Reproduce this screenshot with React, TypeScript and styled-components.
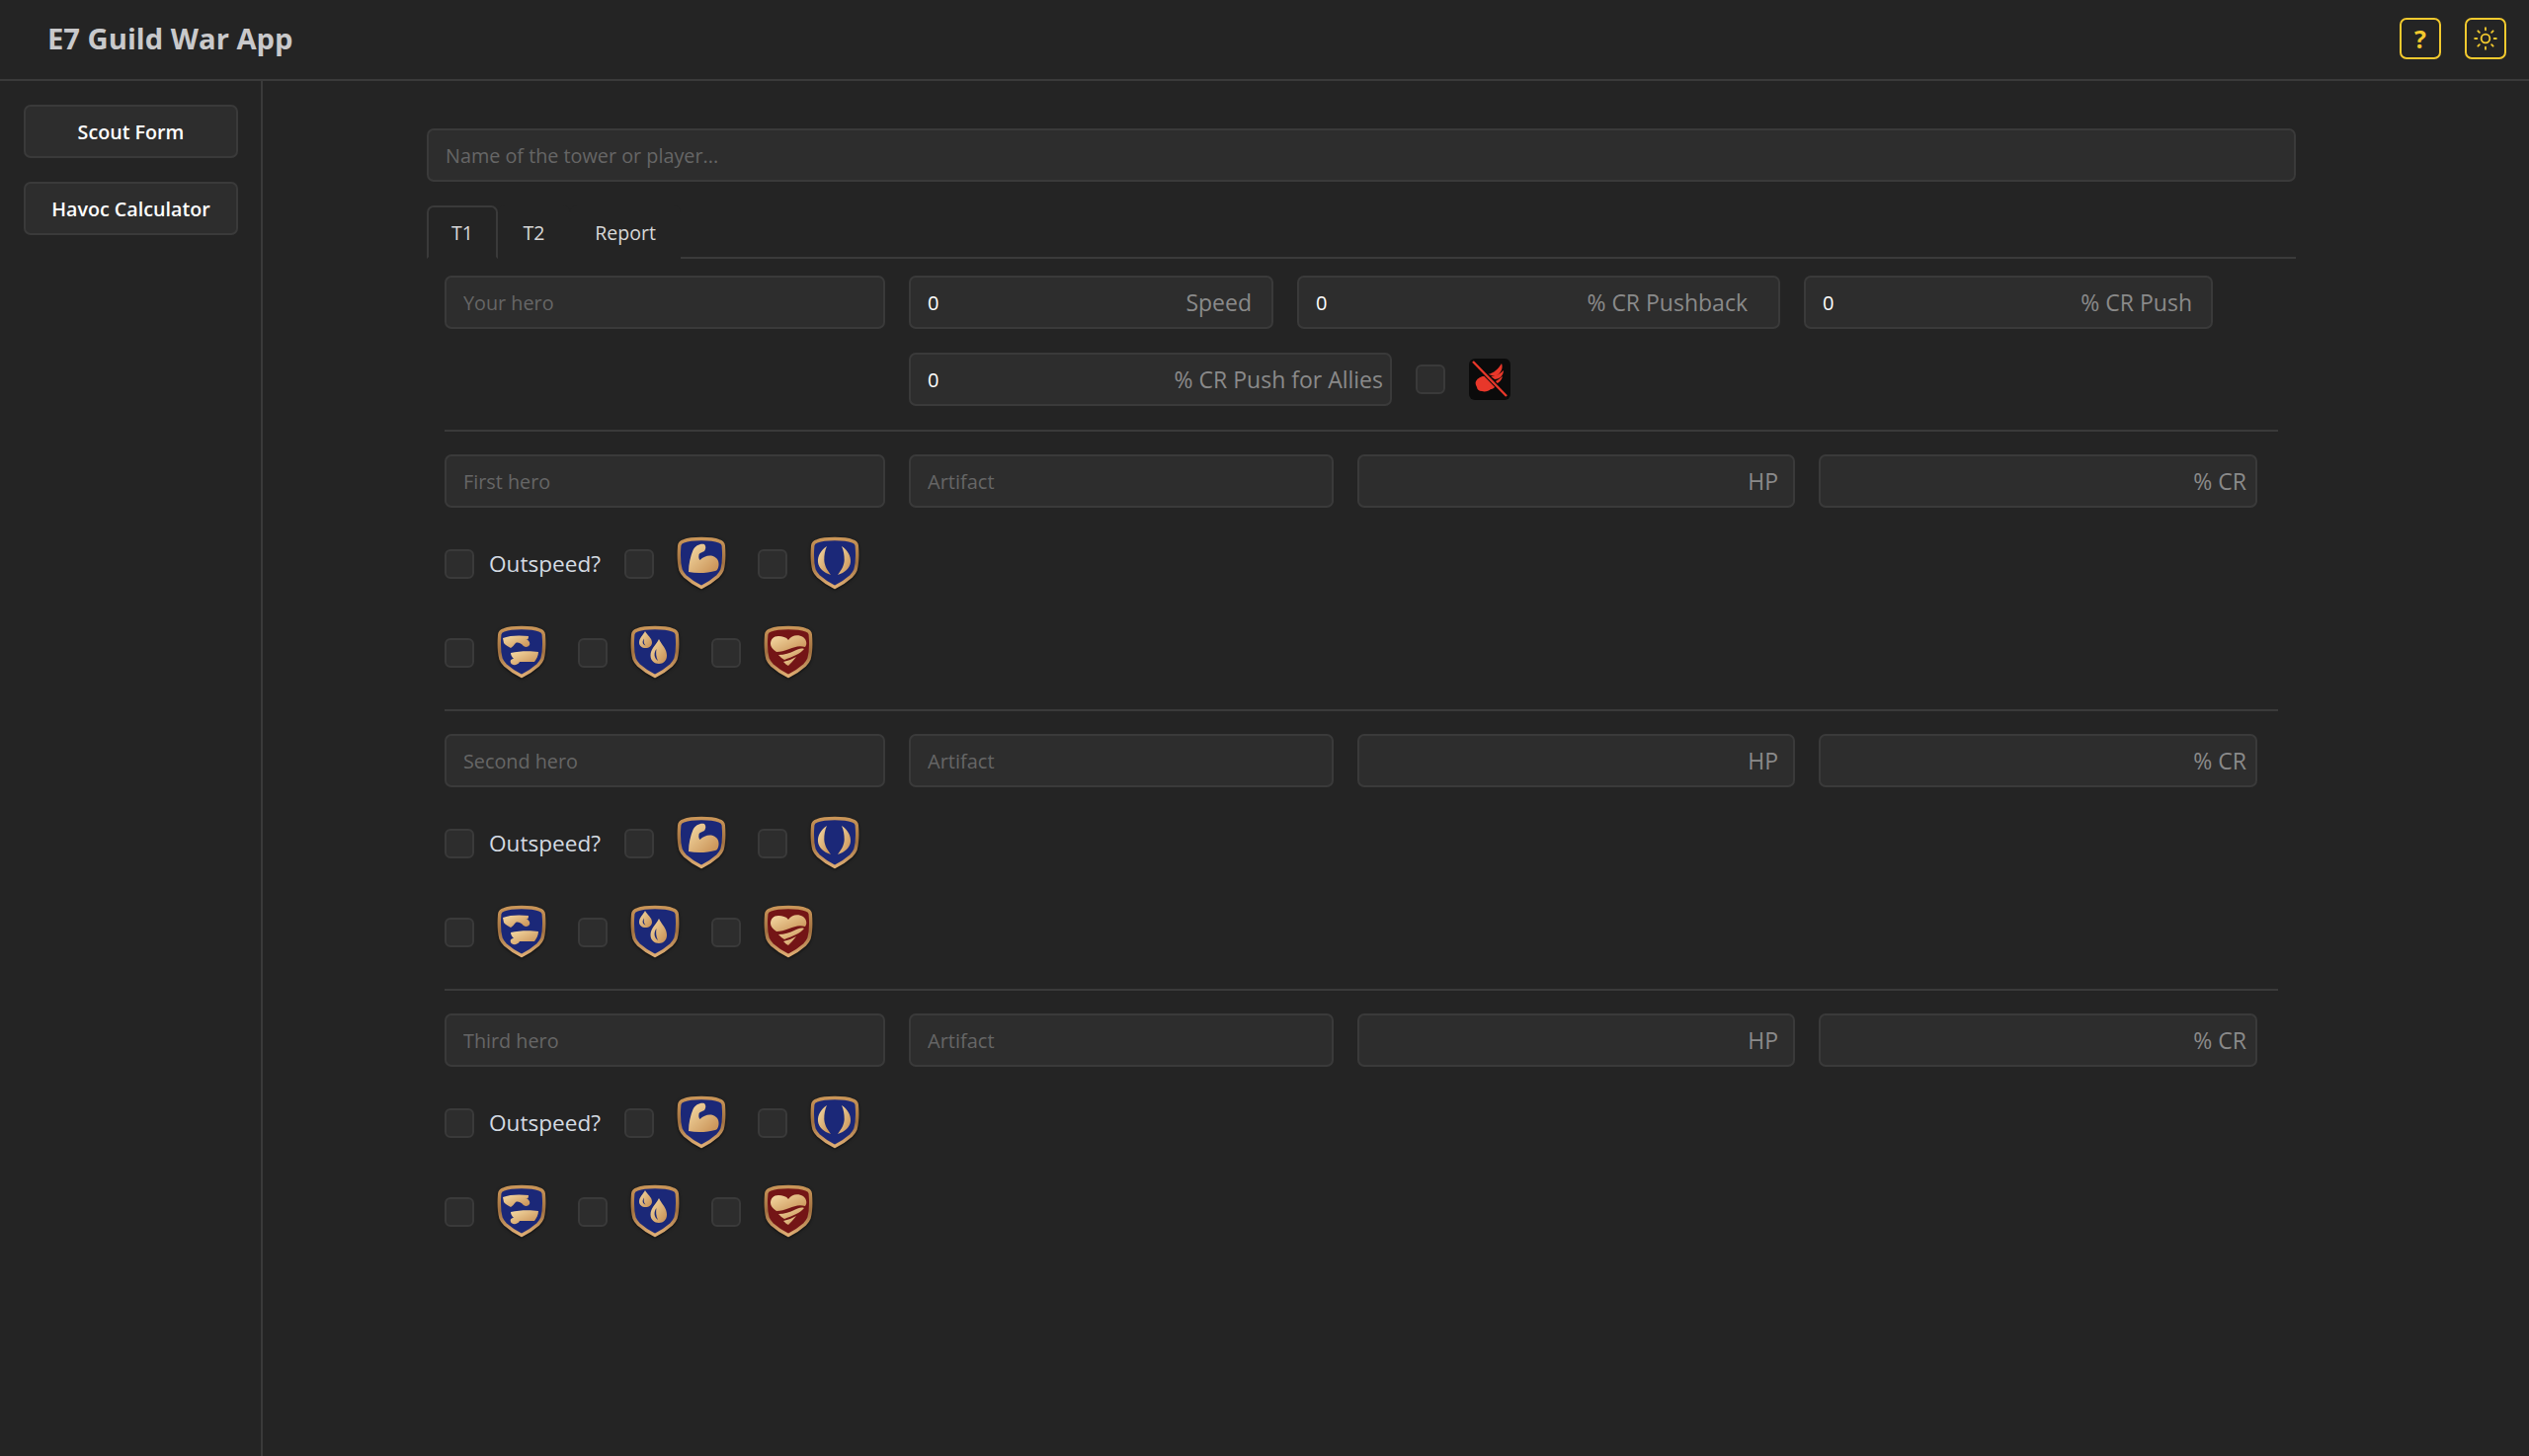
import React from "react";
import styled, { createGlobalStyle } from "styled-components";
import { Sun } from "lucide-react";

const Global = createGlobalStyle`
  html, body { margin: 0; padding: 0; background: #242424; }
  body { font-family: "Open Sans", "Noto Sans", sans-serif; color: #e6e6e6; }
  * { box-sizing: border-box; }
`;

const Page = styled.div`
  width: 2560px;
  height: 1474px;
  display: flex;
  flex-direction: column;
  background: #242424;
  overflow: hidden;
`;
const Header = styled.header`
  height: 82px;
  flex: none;
  display: flex;
  align-items: center;
  justify-content: space-between;
  padding: 0 23px 2px 48px;
  border-bottom: 2px solid #3a3a3a;
`;
const Title = styled.h1`
  margin: 0;
  font-size: 29.2px;
  font-weight: 700;
  color: #c9c9cb;
`;
const HeaderActions = styled.div`
  display: flex;
  gap: 24px;
`;
const IconButton = styled.button`
  width: 42px;
  height: 42px;
  padding: 0;
  display: flex;
  align-items: center;
  justify-content: center;
  background: transparent;
  border: 2px solid #f2c92e;
  border-radius: 7px;
  color: #f2c92e;
  font: 700 25px "Open Sans", sans-serif;
`;
const Body = styled.div`
  flex: 1;
  display: flex;
  min-height: 0;
`;
const Sidebar = styled.nav`
  width: 266px;
  flex: none;
  padding: 24px 24px;
  display: flex;
  flex-direction: column;
  gap: 24px;
  border-right: 2px solid #3a3a3a;
`;
const NavButton = styled.button`
  width: 217px;
  height: 54px;
  background: #2d2d2d;
  border: 2px solid #3a3a3a;
  border-radius: 7px;
  color: #fff;
  font: 600 19.7px "Open Sans", sans-serif;
  padding: 0;
`;
const Main = styled.main`
  flex: 1;
  padding: 48px 236px 0 166px;
`;
const TextBox = styled.input`
  width: 100%;
  height: 54px;
  background: #2d2d2d;
  border: 2px solid #3a3a3a;
  border-radius: 7px;
  padding: 1px 17px 0 17px;
  color: #fff;
  font: 400 19.8px "Open Sans", sans-serif;
  &::placeholder { color: #666; opacity: 1; }
`;
const Tabs = styled.div`
  display: flex;
  margin-top: 24px;
  height: 54px;
  border-bottom: 2px solid #3a3a3a;
`;
const Tab = styled.div<{ $active?: boolean }>`
  height: 54px;
  padding: 0 ${p => (p.$active ? 23 : 23.5)}px;
  display: flex;
  align-items: center;
  font-size: 19.5px;
  color: #d8d8d8;
  background: #242424;
  border: 2px solid ${p => (p.$active ? "#3a3a3a" : "transparent")};
  border-bottom-color: ${p => (p.$active ? "#242424" : "transparent")};
  border-radius: 7px 7px 0 0;
`;
const Panel = styled.section`
  padding: 17px 18px 0;
`;
const TopBlock = styled.div`
  display: flex;
  gap: 24px;
  padding-bottom: 24px;
`;
const HeroSlot = styled.div`
  width: 446px;
  flex: none;
`;
const TopRows = styled.div`
  display: flex;
  flex-direction: column;
  gap: 24px;
`;
const Row = styled.div`
  display: flex;
  align-items: center;
  gap: 24px;
`;
const Field = styled.div<{ $w: number; $pad: number }>`
  width: ${p => p.$w}px;
  height: 54px;
  flex: none;
  display: flex;
  align-items: center;
  padding-right: ${p => p.$pad}px;
  background: #2d2d2d;
  border: 2px solid #3a3a3a;
  border-radius: 7px;
`;
const FieldInput = styled.input`
  flex: 1;
  min-width: 0;
  height: 100%;
  background: transparent;
  border: 0;
  padding: 1px 0 0 17px;
  color: #fff;
  font: 400 20px "Open Sans", sans-serif;
  &::placeholder { color: #666; opacity: 1; }
`;
const Unit = styled.span`
  flex: none;
  color: #8a8a8a;
  font-size: 23px;
`;
const Check = styled.span`
  display: block;
  width: 30px;
  height: 30px;
  flex: none;
  background: #2d2d2d;
  border: 2px solid #3a3a3a;
  border-radius: 6px;
`;
const Divider = styled.hr`
  margin: 0;
  height: 2px;
  border: 0;
  background: #3a3a3a;
`;
const HeroBlock = styled.div`
  padding: 23px 0 31px;
`;
const HeroFields = styled(Row)`
  margin-bottom: 29px;
`;
const StatusRow = styled.div`
  display: flex;
  align-items: center;
  height: 54px;
  & + & { margin-top: 36px; }
  ${Check} { margin-top: 2px; }
`;
const Outspeed = styled.label`
  margin-left: 15px;
  margin-right: 24px;
  font-size: 22.6px;
  color: #d5dbe2;
  white-space: nowrap;
`;
const StatusGroup = styled.div`
  display: flex;
  align-items: center;
  gap: 22px;
  margin-right: 31px;
`;
const WingBadge = styled.span`
  display: block;
  width: 42px;
  height: 42px;
  flex: none;
  background: #0b0b0b;
  border-radius: 6px;
  overflow: hidden;
`;
const WingSvg = styled.svg`
  display: block;
  width: 42px;
  height: 42px;
`;
const BadgeSvg = styled.svg`
  display: block;
  width: 52px;
  height: 54px;
  flex: none;
  filter: drop-shadow(0 1px 1.5px rgba(0, 0, 0, 0.6));
`;

type Kind = "attack" | "eye" | "fists" | "drops" | "heart";

const Shield = ({ kind, n }: { kind: Kind; n: number }) => {
  const id = `${kind}-${n}`;
  return (
    <BadgeSvg viewBox="0 0 52 54">
      <defs>
        <linearGradient id={`g-${id}`} x1="0" y1="0" x2="1" y2="1">
          <stop offset="0" stopColor="#f6dca6" />
          <stop offset="1" stopColor="#c58c50" />
        </linearGradient>
        <linearGradient id={`r-${id}`} x1="0" y1="0" x2="0" y2="1">
          <stop offset="0" stopColor="#c99558" />
          <stop offset="0.5" stopColor="#a07040" />
          <stop offset="1" stopColor="#dfae74" />
        </linearGradient>
      </defs>
      <path
        d="M26 2.500C33 2.500 39 3 44 4.800C47 5.800 48.200 7 48.300 9.500C49 18 49 27 47 34C46 36.500 44.500 38.500 42.500 40.500C37.500 45 32 48.500 26 51.500C20 48.500 14.500 45 9.500 40.500C7.500 38.500 6 36.500 5 34C3 27 3 18 3.700 9.500C3.800 7 5 5.800 8 4.800C13 3 19 2.500 26 2.500Z"
        fill={kind === "heart" ? "#741516" : "#1b2878"}
        stroke={`url(#r-${id})`}
        strokeWidth="3.400"
        strokeLinejoin="round"
      />
      <g fill={`url(#g-${id})`}>
        {kind === "attack" && (
          <path d="M13 36C13 28 15 20 17.500 14C20 9 25 7 29 8C31 10 30.500 13 29 15C26 16.500 23.500 17 23.500 19C23 21 23.500 23 24.500 24C28 20.500 32 19 36 19.500C41 20.500 44 24 43.500 29C43 33 42 34.500 40 35C33 37 22 38 13 36Z" />
        )}
        {kind === "eye" && (
          <>
            <path d="M18 10C12 14 8.500 20 9 26C9.500 32 15 37 22 39C17.500 33 15.500 29 15.300 24C15.300 19 16 14 18 10Z" />
            <path d="M33 10C39 14 42.500 20 42 26C41.500 32 36 37 29 39C33.500 33 35.500 29 35.700 24C35.700 19 35 14 33 10Z" />
          </>
        )}
        {kind === "fists" && (
          <>
            <path d="M7 13C14 10 25 10 33 11C33 14 32 15 30 15C33 14 35 18 34 20C32 23 28 22 27 20C25 18 22 17 20 18C18 20 17 22 15 23C12 21 9 20 8 18Z" />
            <path d="M15 28C24 26 35 26 43 27C43 31 41 34 39 37L24 37C22 41 16 41 15 38C14 35 16 34 18 34C16 32 15 30 15 28Z" />
          </>
        )}
        {kind === "drops" && (
          <>
            <path fillRule="evenodd" d="M16 6C18 10 23 13 23 17.500C23 21 20 23 16.500 23C13 23 10 21 10 17.500C10 13 14 10 16 6ZM15 13.500C13 16 13 19.500 16.500 20.500C14.500 18.500 14.500 16 15 13.500Z" />
            <path fillRule="evenodd" d="M30 14C33 20 38 24 38 30.500C38 36 34.500 39 30 39C25.500 39 21.500 36 21.500 30.500C21.500 24 27 20 30 14ZM27.500 24C24.500 28 25 33 29 36C27 32 26.800 28 27.500 24Z" />
          </>
        )}
        {kind === "heart" && (
          <>
            <path d="M26 15C29 10 36 9 41 12C45 15 45 20 43 22C37 20 32 22 27 24C22 26 18 27 14 27C10 24 8 22 8 19C8 14 11 11 16 11C20 11 24 12 26 15Z" />
            <path d="M42 24C38 29 30 32 22 35C20 34 18 32 16 30C22 30 28 28 32 26C36 24 39 23 42 24Z" />
            <path d="M34 32C31 36 28 39 26 41C24 40 23 39 21 37C26 36 30 34 34 32Z" />
          </>
        )}
      </g>
    </BadgeSvg>
  );
};

const Wing = () => (
  <WingBadge>
    <WingSvg viewBox="0 0 42 42">
      <g fill="#e8372a">
        <path d="M19 16C25 15 30 10 33 5C35 10 32 15 27 18Z" />
        <path d="M22 18C27 18 32 15 35 12C35 17 31 21 26 21Z" />
        <path d="M27 23C29 22 31 20 34 18C33 22 30 25 28 25Z" />
        <path d="M7 23C9 19 14 17 19 18C23 19 26 22 27 26C27 29 24 31 22 31C20 33 16 34 13 33C10 33 8 31 8 29C7 27 6 25 7 23Z" />
      </g>
      <path d="M4 3L38 38" stroke="#0b0b0b" strokeWidth="4.500" />
      <path d="M4 3L38 38" stroke="#e8372a" strokeWidth="2.400" />
    </WingSvg>
  </WingBadge>
);

const Status = ({ kind, n }: { kind: Kind; n: number }) => (
  <StatusGroup>
    <Check />
    <Shield kind={kind} n={n} />
  </StatusGroup>
);

const Hero = ({ placeholder, n }: { placeholder: string; n: number }) => (
  <HeroBlock>
    <HeroFields>
      <HeroSlot><TextBox placeholder={placeholder} /></HeroSlot>
      <Field $w={430} $pad={0}><FieldInput placeholder="Artifact" /></Field>
      <Field $w={443} $pad={15}><FieldInput /><Unit>HP</Unit></Field>
      <Field $w={444} $pad={9}><FieldInput /><Unit>% CR</Unit></Field>
    </HeroFields>
    <StatusRow>
      <Check />
      <Outspeed>Outspeed?</Outspeed>
      <Status kind="attack" n={n} />
      <Status kind="eye" n={n} />
    </StatusRow>
    <StatusRow>
      <Status kind="fists" n={n} />
      <Status kind="drops" n={n} />
      <Status kind="heart" n={n} />
    </StatusRow>
  </HeroBlock>
);

export default function App() {
  return (
    <Page>
      <Global />
      <Header>
        <Title>E7 Guild War App</Title>
        <HeaderActions>
          <IconButton>?</IconButton>
          <IconButton><Sun size={26} strokeWidth={1.7} /></IconButton>
        </HeaderActions>
      </Header>
      <Body>
        <Sidebar>
          <NavButton>Scout Form</NavButton>
          <NavButton>Havoc Calculator</NavButton>
        </Sidebar>
        <Main>
          <TextBox placeholder="Name of the tower or player..." />
          <Tabs>
            <Tab $active>T1</Tab>
            <Tab>T2</Tab>
            <Tab>Report</Tab>
          </Tabs>
          <Panel>
            <TopBlock>
              <HeroSlot><TextBox placeholder="Your hero" /></HeroSlot>
              <TopRows>
                <Row>
                  <Field $w={369} $pad={20}><FieldInput defaultValue="0" /><Unit>Speed</Unit></Field>
                  <Field $w={489} $pad={31}><FieldInput defaultValue="0" /><Unit>% CR Pushback</Unit></Field>
                  <Field $w={414} $pad={19}><FieldInput defaultValue="0" /><Unit>% CR Push</Unit></Field>
                </Row>
                <Row>
                  <Field $w={489} $pad={7}><FieldInput defaultValue="0" /><Unit>% CR Push for Allies</Unit></Field>
                  <Check />
                  <Wing />
                </Row>
              </TopRows>
            </TopBlock>
            <Divider />
            <Hero placeholder="First hero" n={1} />
            <Divider />
            <Hero placeholder="Second hero" n={2} />
            <Divider />
            <Hero placeholder="Third hero" n={3} />
          </Panel>
        </Main>
      </Body>
    </Page>
  );
}
